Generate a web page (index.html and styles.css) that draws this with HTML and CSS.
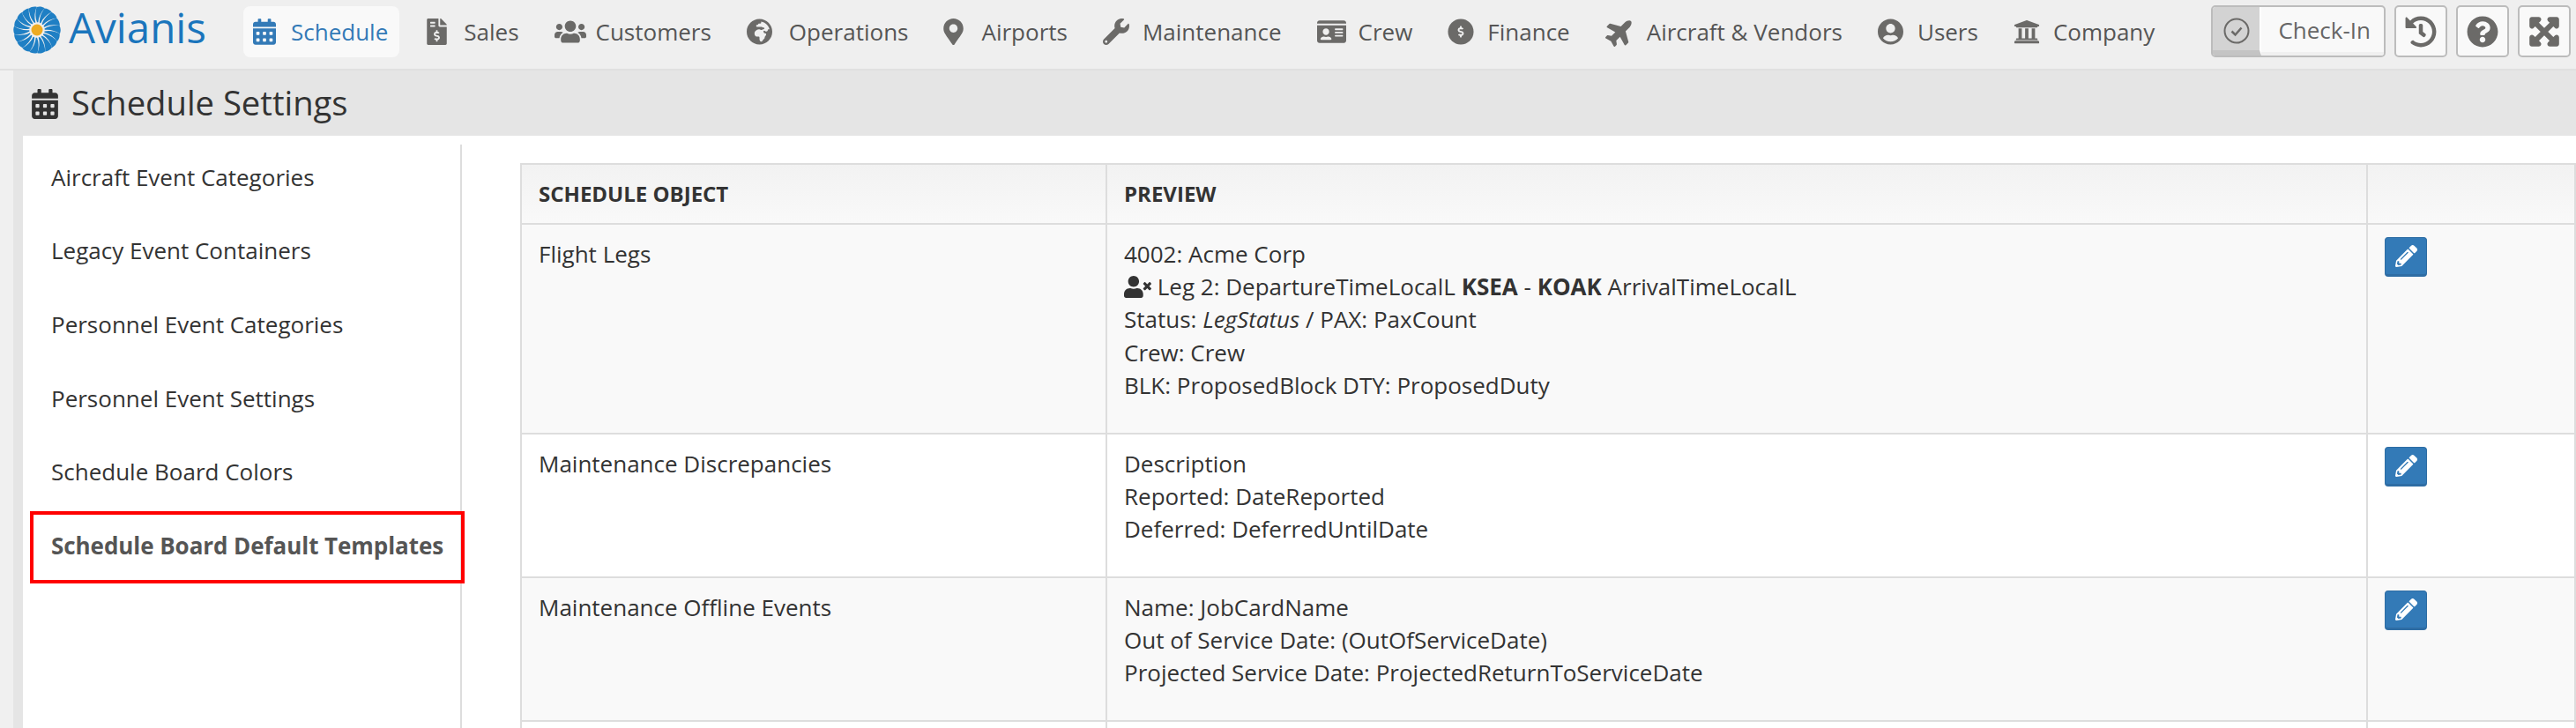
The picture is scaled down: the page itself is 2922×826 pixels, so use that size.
FILE: index.html
```html
<!DOCTYPE html>
<html lang="en">
<head>
<meta charset="utf-8">
<title>Schedule Settings</title>
<link rel="stylesheet" href="styles.css">
</head>
<body>
<header class="topbar">
  <a class="brand">
    <svg class="sun" viewBox="0 0 100 100">
      <defs><path id="blade" d="M50 34C46 25 46 13 49 2C55 0 61 1 66 4C58 13 53 23 52.5 34Z"/></defs>
      <g fill="#1f7fc4">
        <use href="#blade"/><use href="#blade" transform="rotate(20 50 50)"/><use href="#blade" transform="rotate(40 50 50)"/>
        <use href="#blade" transform="rotate(60 50 50)"/><use href="#blade" transform="rotate(80 50 50)"/><use href="#blade" transform="rotate(100 50 50)"/>
        <use href="#blade" transform="rotate(120 50 50)"/><use href="#blade" transform="rotate(140 50 50)"/><use href="#blade" transform="rotate(160 50 50)"/>
        <use href="#blade" transform="rotate(180 50 50)"/><use href="#blade" transform="rotate(200 50 50)"/><use href="#blade" transform="rotate(220 50 50)"/>
        <use href="#blade" transform="rotate(240 50 50)"/><use href="#blade" transform="rotate(260 50 50)"/><use href="#blade" transform="rotate(280 50 50)"/>
        <use href="#blade" transform="rotate(300 50 50)"/><use href="#blade" transform="rotate(320 50 50)"/><use href="#blade" transform="rotate(340 50 50)"/>
      </g>
      <circle cx="50" cy="50" r="12" fill="#eeab22"/>
    </svg>
    <span class="brand-name">Avianis</span>
  </a>
  <nav class="nav">
    <a class="nav-item active"><svg class="ico i-sched" viewBox="0 0 448 512"><path d="M0 464c0 26.5 21.5 48 48 48h352c26.5 0 48-21.5 48-48V192H0v272zm320-196c0-6.6 5.4-12 12-12h40c6.6 0 12 5.4 12 12v40c0 6.6-5.4 12-12 12h-40c-6.6 0-12-5.4-12-12v-40zm0 128c0-6.6 5.4-12 12-12h40c6.6 0 12 5.4 12 12v40c0 6.6-5.4 12-12 12h-40c-6.6 0-12-5.4-12-12v-40zM192 268c0-6.6 5.4-12 12-12h40c6.6 0 12 5.4 12 12v40c0 6.6-5.4 12-12 12h-40c-6.6 0-12-5.4-12-12v-40zm0 128c0-6.6 5.4-12 12-12h40c6.6 0 12 5.4 12 12v40c0 6.6-5.4 12-12 12h-40c-6.6 0-12-5.4-12-12v-40zM64 268c0-6.6 5.4-12 12-12h40c6.6 0 12 5.4 12 12v40c0 6.6-5.4 12-12 12H76c-6.6 0-12-5.4-12-12v-40zm0 128c0-6.6 5.4-12 12-12h40c6.6 0 12 5.4 12 12v40c0 6.6-5.4 12-12 12H76c-6.6 0-12-5.4-12-12v-40zM400 64h-48V16c0-8.8-7.2-16-16-16h-32c-8.8 0-16 7.2-16 16v48H160V16c0-8.8-7.2-16-16-16h-32c-8.8 0-16 7.2-16 16v48H48C21.5 64 0 85.5 0 112v48h448v-48c0-26.5-21.5-48-48-48z"/></svg>Schedule</a>
    <a class="nav-item"><svg class="ico i-sales" viewBox="0 0 384 512"><path d="M377 105L279.1 7c-4.5-4.5-10.6-7-17-7H256v128h128v-6.1c0-6.3-2.5-12.4-7-16.9zm-153 31V0H24C10.7 0 0 10.7 0 24v464c0 13.3 10.7 24 24 24h336c13.3 0 24-10.7 24-24V160H248c-13.2 0-24-10.8-24-24zM64 72c0-4.42 3.58-8 8-8h80c4.42 0 8 3.58 8 8v16c0 4.42-3.58 8-8 8H72c-4.42 0-8-3.58-8-8V72zm0 80v-16c0-4.42 3.58-8 8-8h80c4.42 0 8 3.58 8 8v16c0 4.42-3.58 8-8 8H72c-4.42 0-8-3.58-8-8zm144 263.88V440c0 4.42-3.58 8-8 8h-16c-4.42 0-8-3.58-8-8v-24.29c-11.29-.58-22.27-4.52-31.37-11.35-3.9-2.93-4.1-8.77-.57-12.14l11.75-11.21c2.77-2.64 6.89-2.76 10.13-.73 3.87 2.42 8.26 3.72 12.82 3.72h28.11c6.5 0 11.8-5.92 11.8-13.19 0-5.95-3.61-11.19-8.77-12.73l-45-13.5c-18.59-5.58-31.58-23.42-31.58-43.39 0-24.52 19.05-44.44 42.67-45.07V232c0-4.42 3.58-8 8-8h16c4.42 0 8 3.58 8 8v24.29c11.29.58 22.27 4.51 31.37 11.35 3.9 2.93 4.1 8.77.57 12.14l-11.75 11.21c-2.77 2.64-6.89 2.76-10.13.73-3.87-2.43-8.26-3.72-12.82-3.72h-28.11c-6.5 0-11.8 5.92-11.8 13.19 0 5.95 3.61 11.19 8.77 12.73l45 13.5c18.59 5.58 31.58 23.42 31.58 43.39 0 24.53-19.05 44.44-42.67 45.07z"/></svg>Sales</a>
    <a class="nav-item"><svg class="ico i-cust" viewBox="0 0 640 512"><path d="M96 224c35.3 0 64-28.7 64-64s-28.7-64-64-64-64 28.7-64 64 28.7 64 64 64zm448 0c35.3 0 64-28.7 64-64s-28.7-64-64-64-64 28.7-64 64 28.7 64 64 64zm32 32h-64c-17.6 0-33.5 7.1-45.1 18.6 40.3 22.1 68.9 62 75.1 109.4h66c17.7 0 32-14.3 32-32v-32c0-35.3-28.7-64-64-64zm-256 0c61.9 0 112-50.1 112-112S381.9 32 320 32 208 82.1 208 144s50.1 112 112 112zm76.8 32h-8.3c-20.8 10-43.9 16-68.5 16s-47.6-6-68.5-16h-8.3C179.6 288 128 339.6 128 403.2V432c0 26.5 21.5 48 48 48h288c26.5 0 48-21.5 48-48v-28.8c0-63.6-51.6-115.2-115.2-115.2zm-223.7-13.4C161.5 263.1 145.6 256 128 256H64c-35.3 0-64 28.7-64 64v32c0 17.7 14.3 32 32 32h65.9c6.3-47.4 34.9-87.3 75.2-109.4z"/></svg>Customers</a>
    <a class="nav-item"><svg class="ico i-ops" viewBox="0 0 496 512"><path d="M248 8C111.03 8 0 119.03 0 256s111.03 248 248 248 248-111.03 248-248S384.97 8 248 8zm160 215.5v6.93c0 5.87-3.32 11.24-8.57 13.86l-15.39 7.7a15.485 15.485 0 0 1-15.53-.97l-18.21-12.14a15.52 15.52 0 0 0-13.5-1.81l-2.65.88c-9.7 3.23-13.66 14.79-7.99 23.3l13.24 19.86c2.87 4.31 7.71 6.9 12.89 6.9h8.21c8.56 0 15.5 6.94 15.5 15.5v11.34c0 3.35-1.09 6.62-3.1 9.3l-18.74 24.98c-1.42 1.9-2.39 4.1-2.83 6.43l-4.3 22.83c-.62 3.29-2.29 6.29-4.76 8.56a159.608 159.608 0 0 0-25 29.16l-13.03 19.55a27.756 27.756 0 0 1-23.09 12.36c-10.51 0-20.12-5.94-24.82-15.34a78.902 78.902 0 0 1-8.33-35.29V367.5c0-8.56-6.94-15.5-15.5-15.5h-25.88c-14.49 0-28.38-5.76-38.63-16a54.659 54.659 0 0 1-16-38.63v-14.06c0-17.19 8.1-33.38 21.85-43.7l27.58-20.69a54.663 54.663 0 0 1 32.78-10.93h.89c8.48 0 16.85 1.97 24.43 5.77l14.72 7.36c3.68 1.84 7.93 2.14 11.83.84l47.31-15.77c6.33-2.11 10.6-8.03 10.6-14.7 0-8.56-6.94-15.5-15.5-15.5h-10.09c-4.11 0-8.05-1.63-10.96-4.54l-6.92-6.92a15.493 15.493 0 0 0-10.96-4.54H199.5c-8.56 0-15.5-6.94-15.5-15.5v-4.4c0-7.11 4.84-13.31 11.74-15.04l14.45-3.61c3.74-.94 7-3.23 9.14-6.44l8.08-12.11c2.87-4.31 7.71-6.9 12.89-6.9h24.21c8.56 0 15.5-6.94 15.5-15.5v-21.7C359.23 71.63 422.86 131.02 441.93 208H423.5c-8.56 0-15.5 6.94-15.5 15.5z"/></svg>Operations</a>
    <a class="nav-item"><svg class="ico i-air" viewBox="0 0 384 512"><path d="M172.268 501.67C26.97 291.031 0 269.413 0 192 0 85.961 85.961 0 192 0s192 85.961 192 192c0 77.413-26.97 99.031-172.268 309.67-9.535 13.774-29.93 13.773-39.464 0zM192 272c44.183 0 80-35.817 80-80s-35.817-80-80-80-80 35.817-80 80 35.817 80 80 80z"/></svg>Airports</a>
    <a class="nav-item"><svg class="ico i-maint" viewBox="0 0 512 512"><path d="M507.73 109.1c-2.24-9.03-13.54-12.09-20.12-5.51l-74.36 74.36-67.88-11.31-11.31-67.88 74.36-74.36c6.62-6.62 3.43-17.9-5.66-20.16-47.38-11.74-99.55.91-136.58 37.93-39.64 39.64-50.55 97.1-34.05 147.2L18.74 402.76c-24.99 24.99-24.99 65.51 0 90.5 24.99 24.99 65.51 24.99 90.5 0l213.21-213.21c50.12 16.71 107.47 5.68 147.37-34.22 37.07-37.07 49.7-89.32 37.91-136.73zM64 472c-13.25 0-24-10.75-24-24 0-13.26 10.75-24 24-24s24 10.74 24 24c0 13.25-10.75 24-24 24z"/></svg>Maintenance</a>
    <a class="nav-item"><svg class="ico i-crew" viewBox="0 0 576 512"><path d="M528 32H48C21.5 32 0 53.5 0 80v16h576V80c0-26.5-21.5-48-48-48zM0 432c0 26.5 21.5 48 48 48h480c26.5 0 48-21.5 48-48V128H0v304zm352-232c0-4.4 3.6-8 8-8h144c4.4 0 8 3.6 8 8v16c0 4.4-3.6 8-8 8H360c-4.4 0-8-3.6-8-8v-16zm0 64c0-4.4 3.6-8 8-8h144c4.4 0 8 3.6 8 8v16c0 4.4-3.6 8-8 8H360c-4.4 0-8-3.6-8-8v-16zm0 64c0-4.4 3.6-8 8-8h144c4.4 0 8 3.6 8 8v16c0 4.4-3.6 8-8 8H360c-4.4 0-8-3.6-8-8v-16zM176 192c35.3 0 64 28.7 64 64s-28.7 64-64 64-64-28.7-64-64 28.7-64 64-64zM67.1 396.2C75.5 370.5 99.6 352 128 352h8.2c12.3 5.1 25.7 8 39.8 8s27.6-2.9 39.8-8h8.2c28.4 0 52.5 18.5 60.9 44.2 3.2 9.9-5.2 19.8-15.6 19.8H82.7c-10.4 0-18.8-10-15.6-19.8z"/></svg>Crew</a>
    <a class="nav-item"><svg class="ico i-fin" viewBox="0 0 512 512"><circle cx="256" cy="256" r="248"/><path class="cut" transform="translate(64 -80)" d="M208 415.88V440c0 4.42-3.58 8-8 8h-16c-4.42 0-8-3.58-8-8v-24.29c-11.29-.58-22.27-4.52-31.37-11.35-3.9-2.93-4.1-8.77-.57-12.14l11.75-11.21c2.77-2.64 6.89-2.76 10.13-.73 3.87 2.42 8.26 3.72 12.82 3.72h28.11c6.5 0 11.8-5.92 11.8-13.19 0-5.95-3.61-11.19-8.77-12.73l-45-13.5c-18.59-5.58-31.58-23.42-31.58-43.39 0-24.52 19.05-44.44 42.67-45.07V232c0-4.42 3.58-8 8-8h16c4.42 0 8 3.58 8 8v24.29c11.29.58 22.27 4.51 31.37 11.35 3.9 2.93 4.1 8.77.57 12.14l-11.75 11.21c-2.77 2.64-6.89 2.76-10.13.73-3.87-2.43-8.26-3.72-12.82-3.72h-28.11c-6.5 0-11.8 5.92-11.8 13.19 0 5.95 3.61 11.19 8.77 12.73l45 13.5c18.59 5.58 31.58 23.42 31.58 43.39 0 24.53-19.05 44.44-42.67 45.07z"/></svg>Finance</a>
    <a class="nav-item"><svg class="ico i-plane" viewBox="0 0 576 576"><path transform="rotate(-45 288 288) translate(0 32)" d="M480 192H365.71L260.61 8.06A16.014 16.014 0 0 0 246.71 0h-65.5c-10.63 0-18.3 10.17-15.38 20.39L214.86 192H112l-43.2-57.6c-3.02-4.03-7.77-6.4-12.8-6.4H16.01C5.6 128-2.04 137.78.49 147.88L32 256 .49 364.12C-2.04 374.22 5.6 384 16.01 384H56c5.04 0 9.78-2.37 12.8-6.4L112 320h102.86l-49.03 171.6c-2.92 10.22 4.75 20.4 15.38 20.4h65.5c5.74 0 11.04-3.08 13.89-8.06L365.71 320H480c35.35 0 96-28.65 96-64s-60.65-64-96-64z"/></svg>Aircraft &amp; Vendors</a>
    <a class="nav-item"><svg class="ico i-user" viewBox="0 0 496 512"><path d="M248 8C111 8 0 119 0 256s111 248 248 248 248-111 248-248S385 8 248 8zm0 96c48.6 0 88 39.4 88 88s-39.4 88-88 88-88-39.4-88-88 39.4-88 88-88zm0 344c-58.7 0-111.3-26.6-146.5-68.2 18.8-35.4 55.6-59.8 98.5-59.8 2.4 0 4.8.4 7.1 1.1 13 4.2 26.6 6.9 40.9 6.9 14.3 0 28-2.7 40.9-6.9 2.3-.7 4.7-1.1 7.1-1.1 42.9 0 79.7 24.4 98.5 59.8C359.3 421.4 306.7 448 248 448z"/></svg>Users</a>
    <a class="nav-item"><svg class="ico i-comp" viewBox="0 0 512 512"><path d="M496 128v16a8 8 0 0 1-8 8h-24v12c0 6.627-5.373 12-12 12H60c-6.627 0-12-5.373-12-12v-12H24a8 8 0 0 1-8-8v-16a8 8 0 0 1 4.941-7.392l232-88a7.996 7.996 0 0 1 6.118 0l232 88A8 8 0 0 1 496 128zm-24 304H40c-13.255 0-24 10.745-24 24v16a8 8 0 0 0 8 8h464a8 8 0 0 0 8-8v-16c0-13.255-10.745-24-24-24zM96 192v192H60c-6.627 0-12 5.373-12 12v20h416v-20c0-6.627-5.373-12-12-12h-36V192h-64v192h-64V192h-64v192h-64V192H96z"/></svg>Company</a>
  </nav>
  <div class="actions">
    <a class="checkin">
      <span class="check-box"><svg class="check-ico" viewBox="0 0 30 30"><circle cx="15" cy="15" r="13.5"/><path d="M9.5 15.5l4 4 7-8"/></svg></span>
      <span class="check-label">Check-In</span>
    </a>
    <a class="tool"><svg class="tool-ico" viewBox="0 0 512 512"><path d="M504 255.531c.253 136.64-111.18 248.372-247.82 248.468-59.015.042-113.223-20.53-155.822-54.911-11.077-8.94-11.905-25.541-1.839-35.607l11.267-11.267c8.609-8.609 22.353-9.551 31.891-1.984C173.062 425.135 212.781 440 256 440c101.705 0 184-82.311 184-184 0-101.705-82.311-184-184-184-48.814 0-93.149 18.969-126.068 49.932l50.754 50.754c10.08 10.08 2.941 27.314-11.313 27.314H24c-8.837 0-16-7.163-16-16V38.627c0-14.254 17.234-21.393 27.314-11.314l49.372 49.372C129.209 34.136 189.552 8 256 8c136.81 0 247.747 110.78 248 247.531zm-180.912 78.784l9.823-12.63c8.138-10.463 6.253-25.542-4.21-33.679L288 256.349V152c0-13.255-10.745-24-24-24h-16c-13.255 0-24 10.745-24 24v135.651l65.409 50.874c10.463 8.137 25.541 6.253 33.679-4.21z"/></svg></a>
    <a class="tool"><svg class="tool-ico" viewBox="0 0 512 512"><path d="M504 256c0 136.997-111.043 248-248 248S8 392.997 8 256C8 119.083 119.043 8 256 8s248 111.083 248 248zM262.655 90c-54.497 0-89.255 22.957-116.549 63.758-3.536 5.286-2.353 12.415 2.715 16.258l34.699 26.31c5.205 3.947 12.621 3.008 16.665-2.122 17.864-22.658 30.113-35.797 57.303-35.797 20.429 0 45.698 13.148 45.698 32.958 0 14.976-12.363 22.667-32.534 33.976C247.128 238.528 216 254.941 216 296v4c0 6.627 5.373 12 12 12h56c6.627 0 12-5.373 12-12v-1.333c0-28.462 83.186-29.647 83.186-106.667 0-58.002-60.165-102-116.531-102zM256 338c-25.365 0-46 20.635-46 46 0 25.364 20.635 46 46 46s46-20.636 46-46c0-25.365-20.635-46-46-46z"/></svg></a>
    <a class="tool"><svg class="tool-ico fat" viewBox="0 0 448 512"><path d="M448 344v112a23.94 23.94 0 0 1-24 24H312c-21.39 0-32.09-25.9-17-41l36.2-36.2L224 295.6 116.77 402.9 153 439c15.09 15.1 4.39 41-17 41H24a23.94 23.94 0 0 1-24-24V344c0-21.4 25.89-32.1 41-17l36.19 36.2L184.46 256 77.18 148.7 41 185c-15.1 15.1-41 4.4-41-17V56a23.94 23.94 0 0 1 24-24h112c21.39 0 32.09 25.9 17 41l-36.2 36.2L224 216.4l107.23-107.3L295 73c-15.09-15.1-4.39-41 17-41h112a23.94 23.94 0 0 1 24 24v112c0 21.4-25.89 32.1-41 17l-36.19-36.2L263.54 256l107.28 107.3L407 327.1c15.1-15.2 41-4.5 41 16.9z"/></svg></a>
  </div>
</header>

<main class="page">
  <div class="title-bar">
    <svg class="title-ico" viewBox="0 0 448 512"><path d="M0 464c0 26.5 21.5 48 48 48h352c26.5 0 48-21.5 48-48V192H0v272zm320-196c0-6.6 5.4-12 12-12h40c6.6 0 12 5.4 12 12v40c0 6.6-5.4 12-12 12h-40c-6.6 0-12-5.4-12-12v-40zm0 128c0-6.6 5.4-12 12-12h40c6.6 0 12 5.4 12 12v40c0 6.6-5.4 12-12 12h-40c-6.6 0-12-5.4-12-12v-40zM192 268c0-6.6 5.4-12 12-12h40c6.6 0 12 5.4 12 12v40c0 6.6-5.4 12-12 12h-40c-6.6 0-12-5.4-12-12v-40zm0 128c0-6.6 5.4-12 12-12h40c6.6 0 12 5.4 12 12v40c0 6.6-5.4 12-12 12h-40c-6.6 0-12-5.4-12-12v-40zM64 268c0-6.6 5.4-12 12-12h40c6.6 0 12 5.4 12 12v40c0 6.6-5.4 12-12 12H76c-6.6 0-12-5.4-12-12v-40zm0 128c0-6.6 5.4-12 12-12h40c6.6 0 12 5.4 12 12v40c0 6.6-5.4 12-12 12H76c-6.6 0-12-5.4-12-12v-40zM400 64h-48V16c0-8.8-7.2-16-16-16h-32c-8.8 0-16 7.2-16 16v48H160V16c0-8.8-7.2-16-16-16h-32c-8.8 0-16 7.2-16 16v48H48C21.5 64 0 85.5 0 112v48h448v-48c0-26.5-21.5-48-48-48z"/></svg>
    <h1 class="title">Schedule Settings</h1>
  </div>
  <div class="content">
    <aside class="side">
      <a class="side-item">Aircraft Event Categories</a>
      <a class="side-item">Legacy Event Containers</a>
      <a class="side-item">Personnel Event Categories</a>
      <a class="side-item">Personnel Event Settings</a>
      <a class="side-item">Schedule Board Colors</a>
      <a class="side-item current">Schedule Board Default Templates</a>
    </aside>
    <section class="panel">
      <table class="grid">
        <colgroup><col class="c1"><col class="c2"><col></colgroup>
        <thead>
          <tr><th>Schedule Object</th><th>Preview</th><th></th></tr>
        </thead>
        <tbody>
          <tr>
            <td>Flight Legs</td>
            <td>4002: Acme Corp<br>
              <svg class="utimes" viewBox="0 0 640 512"><path d="M589.6 240l45.6-45.6c6.3-6.3 6.3-16.5 0-22.8l-22.8-22.8c-6.3-6.3-16.5-6.3-22.8 0L544 194.4l-45.6-45.6c-6.3-6.3-16.5-6.3-22.8 0l-22.8 22.8c-6.3 6.3-6.3 16.5 0 22.8l45.6 45.6-45.6 45.6c-6.3 6.3-6.3 16.5 0 22.8l22.8 22.8c6.3 6.3 16.5 6.3 22.8 0l45.6-45.6 45.6 45.6c6.3 6.3 16.5 6.3 22.8 0l22.8-22.8c6.3-6.3 6.3-16.5 0-22.8L589.6 240zM224 256c70.7 0 128-57.3 128-128S294.7 0 224 0 96 57.3 96 128s57.3 128 128 128zm89.6 32h-16.7c-22.2 10.2-46.9 16-72.9 16s-50.6-5.8-72.9-16h-16.7C60.2 288 0 348.2 0 422.4V464c0 26.5 21.5 48 48 48h352c26.5 0 48-21.5 48-48v-41.6c0-74.2-60.2-134.4-134.4-134.4z"/></svg> Leg 2: DepartureTimeLocalL <b>KSEA</b> - <b>KOAK</b> ArrivalTimeLocalL<br>
              Status: <i>LegStatus</i> / PAX: PaxCount<br>
              Crew: Crew<br>
              BLK: ProposedBlock DTY: ProposedDuty</td>
            <td><a class="edit"><svg class="pencil" viewBox="0 0 512 512"><path d="M497.9 142.1l-46.1 46.1c-4.7 4.7-12.3 4.7-17 0l-111-111c-4.7-4.7-4.7-12.3 0-17l46.1-46.1c18.7-18.7 49.1-18.7 67.9 0l60.1 60.1c18.8 18.7 18.8 49.1 0 67.9zM284.2 99.8L21.6 362.4.4 483.9c-2.9 16.4 11.4 30.6 27.8 27.8l121.5-21.3 262.6-262.6c4.7-4.7 4.7-12.3 0-17l-111-111c-4.8-4.7-12.4-4.7-17.1 0zM124.1 339.9c-5.5-5.5-5.5-14.3 0-19.8l154-154c5.5-5.5 14.3-5.5 19.8 0s5.5 14.3 0 19.8l-154 154c-5.5 5.5-14.3 5.5-19.8 0zM88 424h48v36.3l-64.5 11.3-31.1-31.1L51.7 376H88v48z"/></svg></a></td>
          </tr>
          <tr>
            <td>Maintenance Discrepancies</td>
            <td>Description<br>Reported: DateReported<br>Deferred: DeferredUntilDate</td>
            <td><a class="edit"><svg class="pencil" viewBox="0 0 512 512"><path d="M497.9 142.1l-46.1 46.1c-4.7 4.7-12.3 4.7-17 0l-111-111c-4.7-4.7-4.7-12.3 0-17l46.1-46.1c18.7-18.7 49.1-18.7 67.9 0l60.1 60.1c18.8 18.7 18.8 49.1 0 67.9zM284.2 99.8L21.6 362.4.4 483.9c-2.9 16.4 11.4 30.6 27.8 27.8l121.5-21.3 262.6-262.6c4.7-4.7 4.7-12.3 0-17l-111-111c-4.8-4.7-12.4-4.7-17.1 0zM124.1 339.9c-5.5-5.5-5.5-14.3 0-19.8l154-154c5.5-5.5 14.3-5.5 19.8 0s5.5 14.3 0 19.8l-154 154c-5.5 5.5-14.3 5.5-19.8 0zM88 424h48v36.3l-64.5 11.3-31.1-31.1L51.7 376H88v48z"/></svg></a></td>
          </tr>
          <tr>
            <td>Maintenance Offline Events</td>
            <td>Name: JobCardName<br>Out of Service Date: (OutOfServiceDate)<br>Projected Service Date: ProjectedReturnToServiceDate</td>
            <td><a class="edit"><svg class="pencil" viewBox="0 0 512 512"><path d="M497.9 142.1l-46.1 46.1c-4.7 4.7-12.3 4.7-17 0l-111-111c-4.7-4.7-4.7-12.3 0-17l46.1-46.1c18.7-18.7 49.1-18.7 67.9 0l60.1 60.1c18.8 18.7 18.8 49.1 0 67.9zM284.2 99.8L21.6 362.4.4 483.9c-2.9 16.4 11.4 30.6 27.8 27.8l121.5-21.3 262.6-262.6c4.7-4.7 4.7-12.3 0-17l-111-111c-4.8-4.7-12.4-4.7-17.1 0zM124.1 339.9c-5.5-5.5-5.5-14.3 0-19.8l154-154c5.5-5.5 14.3-5.5 19.8 0s5.5 14.3 0 19.8l-154 154c-5.5 5.5-14.3 5.5-19.8 0zM88 424h48v36.3l-64.5 11.3-31.1-31.1L51.7 376H88v48z"/></svg></a></td>
          </tr>
          <tr class="tail"><td></td><td></td><td></td></tr>
        </tbody>
      </table>
    </section>
  </div>
</main>
</body>
</html>
```
FILE: styles.css
```css
* { box-sizing: border-box; }
html, body { margin: 0; height: 826px; overflow: hidden; }
body {
  background: #f0f0f0;
  color: #333;
  font-family: "Open Sans", "Liberation Sans", sans-serif;
  font-size: 26px;
  display: flex;
  flex-direction: column;
}

/* top bar */
.topbar {
  height: 80px;
  flex: none;
  display: flex;
  align-items: flex-start;
  background: #efefef;
  border-bottom: 2px solid #e0e0e0;
  padding: 7px 6px 0 15px;
}
.brand { display: flex; align-items: center; gap: 9px; height: 58px; width: 261px; flex: none; }
.sun { width: 54px; height: 54px; flex: none; margin-top: -4px; }
.brand-name { font-size: 47.5px; font-weight: 400; color: #1a75bc; line-height: 50px; margin-top: -10px; }
.nav { display: flex; align-items: flex-start; gap: 12px; flex: 1; min-width: 0; }
.nav-item {
  display: flex;
  align-items: center;
  height: 58px;
  padding: 0 14px;
  border-radius: 8px;
  color: #555;
  white-space: nowrap;
  fill: #6b6a68;
}
.nav-item.active { background: #f9f9f9; color: #337ab7; fill: #337ab7; padding: 0 13px 0 11px; margin-right: 5px; }
.ico { height: 30px; flex: none; }
.i-sched { width: 26px; margin-right: 17px; }
.i-sales { width: 23px; margin-right: 19px; }
.i-cust { width: 36px; margin-right: 11px; }
.i-ops { width: 29px; margin-right: 19px; }
.i-air { width: 23px; margin-right: 20px; }
.i-maint { width: 30px; margin-right: 15px; }
.i-crew { width: 33px; margin-right: 14px; }
.i-fin { width: 30px; margin-right: 15px; }
.i-plane { width: 34px; height: 34px; margin-right: 13px; }
.i-user { width: 29px; margin-right: 16px; }
.i-comp { width: 30px; margin-right: 15px; }
.cut { fill: #efefef; }

.actions { display: flex; gap: 10px; flex: none; }
.checkin {
  display: flex;
  width: 198px;
  height: 59px;
  margin-top: -1px;
  border: 2px solid #bcbcbc;
  border-radius: 5px;
  overflow: hidden;
  background: #f9f9f9;
  color: #666;
}
.check-box {
  width: 55px;
  flex: none;
  background: #d3d3d3;
  border-bottom: 6px solid #c4c4c4;
  border-right: 2px solid #fff;
  display: flex;
  align-items: center;
  justify-content: center;
  padding-top: 4px;
}
.check-ico { width: 30px; height: 30px; fill: none; stroke: #6b6a68; stroke-width: 2; }
.check-ico path { stroke-width: 2.5; }
.check-label { flex: 1; display: flex; align-items: center; justify-content: flex-end; padding-right: 15px; border-bottom: 4px solid #f0f0f0; }
.tool {
  width: 60px;
  height: 59px;
  margin-top: -1px;
  border: 2px solid #bcbcbc;
  border-radius: 5px;
  background: #f9f9f9;
  display: flex;
  align-items: center;
  justify-content: center;
  fill: #6b6a68;
}
.tool-ico { height: 36px; width: 36px; }
.tool-ico.fat path { stroke: #6b6a68; stroke-width: 30; stroke-linejoin: round; }

/* page */
.page {
  flex: 1;
  margin-left: 15px;
  background: #e5e5e5;
  padding-left: 11px;
  display: flex;
  flex-direction: column;
  min-height: 0;
}
.title-bar { height: 74px; flex: none; display: flex; align-items: center; gap: 15px; padding-left: 10px; }
.title-ico { width: 30px; height: 34px; fill: #333; margin-top: 2px; }
.title { margin: 0 0 2px; font-size: 38.2px; font-weight: 400; line-height: 1; color: #333; }
.content { flex: 1; background: #fff; display: flex; min-height: 0; }

/* sidebar */
.side {
  width: 498px;
  flex: none;
  margin-top: 10px;
  border-right: 2px solid #ddd;
  display: flex;
  flex-direction: column;
}
.side-item {
  height: 83.6px;
  flex: none;
  display: flex;
  align-items: center;
  padding-left: 32px;
  position: relative;
  top: -5px;
  color: #333;
}
.side-item.current { font-weight: 700; color: #555; letter-spacing: -.06px; }
.side-item.current::after {
  content: "";
  position: absolute;
  left: 8px;
  right: -5px;
  top: 3px;
  bottom: -1px;
  border: 4px solid #f00;
}

/* table */
.panel { flex: 1; min-width: 0; padding: 31px 0 0 66px; }
.grid {
  width: 2332px;
  border-collapse: collapse;
  table-layout: fixed;
  line-height: 37.2px;
}
.c1 { width: 664px; }
.c2 { width: 1430px; }
.grid th, .grid td { border: 2px solid #ddd; vertical-align: top; text-align: left; }
.grid th {
  height: 68px;
  padding: 0 19px;
  vertical-align: middle;
  font-size: 24px;
  font-weight: 700;
  text-transform: uppercase;
  background: linear-gradient(#f2f2f2, #f9f9f9);
}
.grid td { padding: 15px 19px 34.5px; }
.grid tbody tr:nth-child(odd) td { background: #f9f9f9; }
.grid .tail td { height: 8px; padding: 0; border-bottom: 0; background: #fff; }
.utimes { width: 31px; height: 25px; vertical-align: -3px; fill: #333; }
.edit {
  width: 48px;
  height: 45px;
  margin-top: -1px;
  display: flex;
  align-items: center;
  justify-content: center;
  background: #337ab7;
  border: 1px solid #2e6da4;
  border-bottom-width: 3px;
  border-radius: 4px;
  fill: #fff;
}
.pencil { width: 25px; height: 25px; }
```
